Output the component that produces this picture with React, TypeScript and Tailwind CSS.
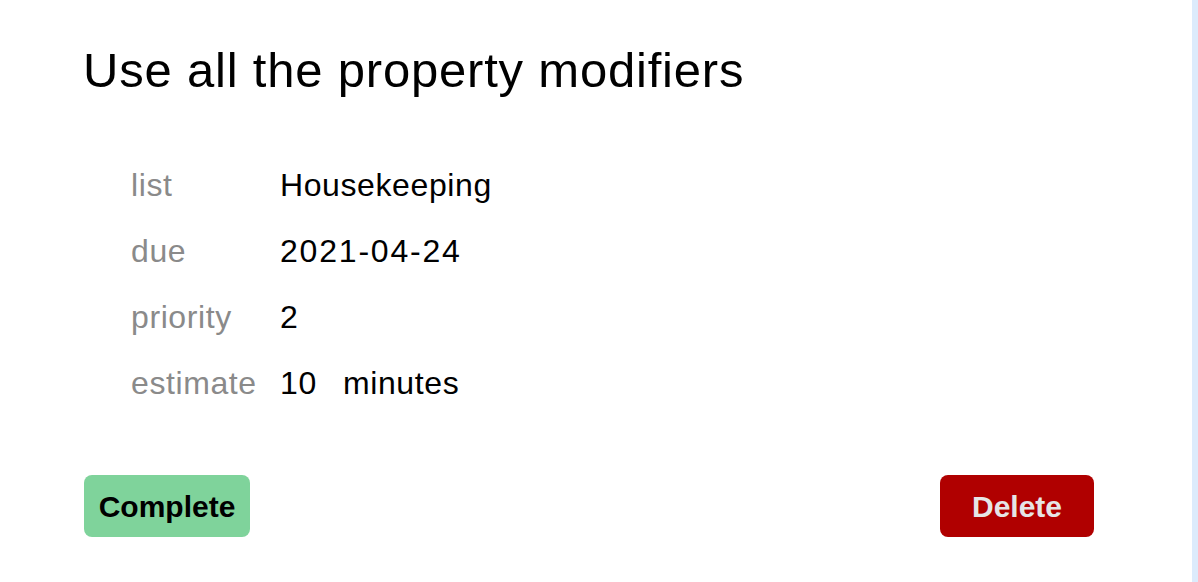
import React from "react";

const rows: { label: string; value: React.ReactNode }[] = [
  { label: "list", value: "Housekeeping" },
  { label: "due", value: <span className="tracking-[1.8px]">2021-04-24</span> },
  { label: "priority", value: "2" },
  {
    label: "estimate",
    value: (
      <span className="flex">
        <span className="w-[63px]">10</span>
        <span>minutes</span>
      </span>
    ),
  },
];

export default function App() {
  return (
    <div className="flex h-[582px] w-full bg-white font-['Liberation_Sans',Arial,sans-serif]">
      <main className="flex flex-1 flex-col pl-[80px] pr-[98px] pt-[46px]">
        <h1 className="ml-[3px] text-[49px] leading-none tracking-[0.8px] text-black">
          Use all the property modifiers
        </h1>
        <div className="mt-[57px] grid grid-cols-[149px_1fr] pl-[51px] text-[32px] leading-[66px] tracking-[0.6px]">
          {rows.map((r) => (
            <React.Fragment key={r.label}>
              <div className="text-[#8a8a8a]">{r.label}</div>
              <div className="text-black">{r.value}</div>
            </React.Fragment>
          ))}
        </div>
        <div className="mt-[59px] flex items-center justify-between pl-[4px]">
          <button className="h-[62px] w-[166px] rounded-[8px] bg-[#7fd39b] text-[30px] font-bold text-black">
            Complete
          </button>
          <button className="h-[62px] w-[154px] rounded-[8px] bg-[#b00000] text-[30px] font-bold text-[#e6e6e6]">
            Delete
          </button>
        </div>
      </main>
      <div className="w-[6px] bg-[#dcebfc]" />
    </div>
  );
}
